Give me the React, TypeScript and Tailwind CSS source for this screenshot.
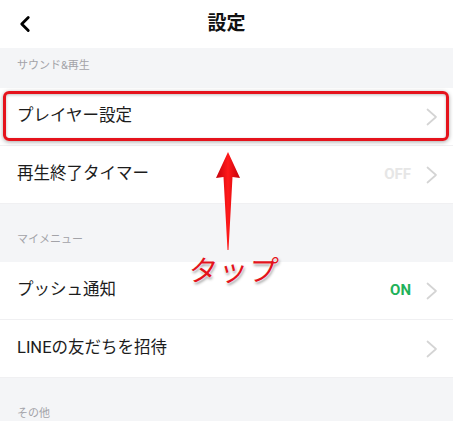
import { ChevronLeft } from 'lucide-react'

type Row = { label: string; value?: string; tone?: 'off' | 'on' }

const SECTIONS: { title: string; first?: boolean; rows: Row[] }[] = [
  {
    title: 'サウンド&再生',
    first: true,
    rows: [
      { label: 'プレイヤー設定' },
      { label: '再生終了タイマー', value: 'OFF', tone: 'off' },
    ],
  },
  {
    title: 'マイメニュー',
    rows: [
      { label: 'プッシュ通知', value: 'ON', tone: 'on' },
      { label: 'LINEの友だちを招待' },
    ],
  },
  { title: 'その他', rows: [] },
]

function Chevron() {
  return (
    <svg width="12" height="18" viewBox="0 0 12 18" className="text-[#d4d4d4]">
      <polyline points="1.5,1.5 10,9 1.5,16.5" fill="none" stroke="currentColor" strokeWidth="1.7" strokeLinecap="round" strokeLinejoin="round" />
    </svg>
  )
}

function SettingRow({ row }: { row: Row }) {
  return (
    <div className="flex h-[58px] items-center justify-between border-b border-[#f0f0f2] bg-white pl-[17px] pr-[15px]">
      <span className="text-[16.5px] text-[#1c1c1c]">{row.label}</span>
      <div className="flex items-center gap-[15px]">
        {row.value && (
          <span
            className={
              row.tone === 'on'
                ? 'text-[15px] font-bold text-[#1fb25a]'
                : 'text-[15px] font-bold text-[#e6e6e6]'
            }
          >
            {row.value}
          </span>
        )}
        <Chevron />
      </div>
    </div>
  )
}

export default function App() {
  return (
    <div className="relative h-[421px] w-[453px] overflow-hidden bg-[#f4f5f7] font-['Roboto','Noto_Sans_CJK_JP',sans-serif]">
      {/* Header */}
      <div className="relative flex h-[48px] items-center justify-center bg-white">
        <ChevronLeft className="absolute left-[12px] h-[26px] w-[26px] text-black" strokeWidth={2.6} />
        <h1 className="text-[19px] font-bold text-[#111]">設定</h1>
      </div>

      {SECTIONS.map((s) => (
        <div key={s.title}>
          <div className={`flex items-end pb-[14px] pl-[17px] ${s.first ? 'h-[40px]' : 'h-[58px]'}`}>
            <span className="text-[11px] text-[#a3a3a8]">{s.title}</span>
          </div>
          {s.rows.map((r) => (
            <SettingRow key={r.label} row={r} />
          ))}
        </div>
      ))}

      {/* Annotation: highlight box */}
      <div className="absolute left-[3px] top-[91px] h-[50px] w-[446px] rounded-[6px] border-[3px] border-[#e5131c] shadow-[0_1px_4px_rgba(0,0,0,0.35),inset_0_1px_3px_rgba(0,0,0,0.25)]" />

      {/* Annotation: arrow */}
      <svg className="absolute left-[210px] top-[148px]" width="36" height="106" viewBox="0 0 36 106">
        <defs>
          <linearGradient id="ar" x1="0" y1="0" x2="1" y2="0">
            <stop offset="0" stopColor="#c4000b" />
            <stop offset="0.5" stopColor="#ff1a1a" />
            <stop offset="1" stopColor="#c4000b" />
          </linearGradient>
        </defs>
        <path d="M18 4 L30 30 L22.5 29 L18.5 102 L17.5 102 L13.5 29 L6 30 Z" fill="url(#ar)" />
      </svg>

      {/* Annotation: label */}
      <div className="absolute left-[189px] top-[254px] -skew-x-6 text-[29px] leading-none tracking-[1px] text-[#e3141c] [text-shadow:0_0_2px_#fff,0_0_2px_#fff,1px_2px_3px_rgba(0,0,0,0.45)] font-['Noto_Sans_CJK_JP',sans-serif]">
        タップ
      </div>
    </div>
  )
}
